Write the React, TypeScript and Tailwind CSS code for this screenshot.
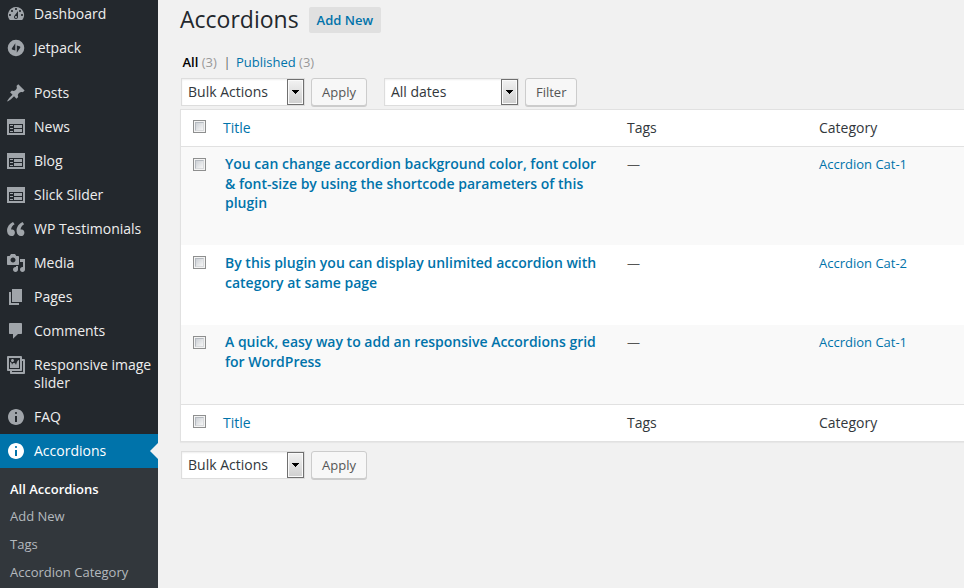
import type { ReactNode } from "react";

const paths = {
  dashboard:
    "M3.76 16h12.48A7.998 7.998 0 0 0 10 3a7.998 7.998 0 0 0-6.24 13zM10 4c.55 0 1 .45 1 1s-.45 1-1 1-1-.45-1-1 .45-1 1-1zM6 6c.55 0 1 .45 1 1s-.45 1-1 1-1-.45-1-1 .45-1 1-1zm8 0c.55 0 1 .45 1 1s-.45 1-1 1-1-.45-1-1 .45-1 1-1zm-5.37 5.55L12 7v6c0 1.1-.9 2-2 2s-2-.9-2-2c0-.57.24-1.08.63-1.45zM4 10c.55 0 1 .45 1 1s-.45 1-1 1-1-.45-1-1 .45-1 1-1zm12 0c.55 0 1 .45 1 1s-.45 1-1 1-1-.45-1-1 .45-1 1-1zm-5 3c0-.55-.45-1-1-1s-1 .45-1 1 .45 1 1 1 1-.45 1-1z",
  jetpack:
    "M10 1.7a8.3 8.3 0 1 0 0 16.6 8.3 8.3 0 0 0 0-16.6zM9.3 5.2v7.2L6.6 11.7c-.8-.2-1-.9-.7-1.5zM10.8 7.6l2.7.7c.8.2 1 .9.7 1.5l-3.4 5z",
  pin: "M10.44 3.02l1.82-1.82 6.36 6.35-1.83 1.82c-1.05-.68-2.48-.57-3.41.36l-.75.75c-.92.93-1.04 2.35-.35 3.41l-1.83 1.82-2.41-2.41-2.8 2.79c-.42.42-3.38 2.71-3.8 2.29s1.86-3.39 2.28-3.81l2.79-2.79L4.1 9.36l1.83-1.82c1.05.69 2.48.57 3.4-.36l.75-.75c.93-.92 1.05-2.35.36-3.41z",
  feedback:
    "M1 2h18v16H1zM3 7v9h14V7zM4 8h3v1H4zM8 8h8v3H8zM4 11h3v1H4zM8 12h8v3H8zM4 14h3v1H4z",
  quote:
    "M8.9 13.8c0-.88-.24-1.63-.72-2.25-.73-.92-2.16-1.04-2.99-.85C4.85 8.75 6.5 6.27 8.64 5.2L7 3C3.78 4.5.6 8 1.14 12.44 1.48 15.25 3.1 17 5.4 17c1 0 1.85-.3 2.5-.85s1-1.35 1-2.35zm9.5 0c0-.88-.24-1.63-.72-2.25-.73-.92-2.16-1.04-2.99-.85-.34-1.95 1.31-4.43 3.45-5.5L16.5 3c-3.22 1.5-6.4 5-5.86 9.44.34 2.81 1.96 4.56 4.26 4.56 1 0 1.85-.3 2.5-.85s1-1.35 1-2.35z",
  media:
    "M13 11V4c0-.55-.45-1-1-1h-1.67L9 1H5L3.67 3H2c-.55 0-1 .45-1 1v7c0 .55.45 1 1 1h10c.55 0 1-.45 1-1zM7 4.5c1.38 0 2.5 1.12 2.5 2.5S8.38 9.5 7 9.5 4.5 8.38 4.5 7 5.62 4.5 7 4.5zM14 6h5v10.5c0 1.38-1.12 2.5-2.5 2.5S14 17.88 14 16.5s1.12-2.5 2.5-2.5c.17 0 .34.02.5.05V9h-3V6zm-4 8.05V13h2v3.5c0 1.38-1.12 2.5-2.5 2.5S7 17.88 7 16.5 8.12 14 9.5 14c.17 0 .34.02.5.05z",
  page: "M6 15V2h10v13H6zm-1 1h8v2H3V5h2v11z",
  comment:
    "M4 2h11c.6 0 1 .4 1 1v9c0 .6-.4 1-1 1h-3l-5 4.7V13H4c-.6 0-1-.4-1-1V3c0-.6.4-1 1-1z",
  gallery:
    "M16 4h1.96c.57 0 1.04.47 1.04 1.04v12.92c0 .57-.47 1.04-1.04 1.04H5.04C4.47 19 4 18.53 4 17.96V16H2.04C1.47 16 1 15.53 1 14.96V2.04C1 1.47 1.47 1 2.04 1h12.92c.57 0 1.04.47 1.04 1.04V4zM3 14h11V3H3v11zm5-8.5C8 4.67 7.33 4 6.5 4S5 4.67 5 5.5 5.67 7 6.5 7 8 6.33 8 5.5zm2 4.5s1-5 3-5v8H4V7c2 0 2 3 2 3s.33-2 2-2 2 2 2 2zm7 7V6h-1v8.96c0 .57-.47 1.04-1.04 1.04H6v1h11z",
  info: "M10 2c4.42 0 8 3.58 8 8s-3.58 8-8 8-8-3.58-8-8 3.58-8 8-8zm1 4c0-.55-.45-1-1-1s-1 .45-1 1 .45 1 1 1 1-.45 1-1zm0 9V9H9v6h2z",
};

type IconName = keyof typeof paths;

function MenuItem({ icon, label, active }: { icon: IconName; label: string; active?: boolean }) {
  return (
    <a
      className={
        active
          ? "relative flex items-start bg-[#0073aa] py-2 pl-1.5 text-white"
          : "flex items-start py-2 pl-1.5 text-[#eee]"
      }
    >
      <svg
        viewBox="0 0 20 20"
        fillRule="evenodd"
        className={
          active
            ? "-my-px mr-2 size-5 shrink-0 fill-white"
            : "-my-px mr-2 size-5 shrink-0 fill-[#a0a5aa]"
        }
      >
        <path d={paths[icon]} />
      </svg>
      <span className="w-[122px] text-sm leading-[18px]">{label}</span>
      {active && (
        <span className="absolute top-[9px] right-0 border-y-8 border-r-8 border-y-transparent border-r-[#f1f1f1]" />
      )}
    </a>
  );
}

const mainMenu: { icon: IconName; label: string; active?: boolean }[] = [
  { icon: "pin", label: "Posts" },
  { icon: "feedback", label: "News" },
  { icon: "feedback", label: "Blog" },
  { icon: "feedback", label: "Slick Slider" },
  { icon: "quote", label: "WP Testimonials" },
  { icon: "media", label: "Media" },
  { icon: "page", label: "Pages" },
  { icon: "comment", label: "Comments" },
  { icon: "gallery", label: "Responsive image slider" },
  { icon: "info", label: "FAQ" },
  { icon: "info", label: "Accordions", active: true },
];

function Sidebar() {
  return (
    <nav className="flex h-[588px] w-[158px] shrink-0 flex-col overflow-hidden bg-[#23282d]">
      <div className="-mt-[3px] mb-[11px]">
        <MenuItem icon="dashboard" label="Dashboard" />
        <MenuItem icon="jetpack" label="Jetpack" />
      </div>
      {mainMenu.map((m) => (
        <MenuItem key={m.label} {...m} />
      ))}
      <div className="flex flex-1 flex-col bg-[#32373c] pt-[7px] pl-2.5 text-[13px] leading-[28px] text-[#b4b9be]">
        <a className="font-semibold text-white">All Accordions</a>
        <a className="-mt-px">Add New</a>
        <a>Tags</a>
        <a>Accordion Category</a>
      </div>
    </nav>
  );
}

function Select({ label, wide }: { label: string; wide?: boolean }) {
  return (
    <div
      className={
        (wide ? "w-[135px]" : "w-[124px]") +
        " flex h-7 justify-between border border-[#ddd] bg-white pl-1.5 text-sm leading-[26px] text-[#32373c] shadow-[inset_0_1px_2px_rgba(0,0,0,0.07)]"
      }
    >
      <span>{label}</span>
      <span className="flex w-[17px] items-center justify-center border border-[#707070] bg-linear-to-b from-[#f2f2f2] to-[#cfcfcf] shadow-[inset_0_0_0_1px_#fafafa]">
        <svg viewBox="0 0 7 4" className="h-1 w-[7px] fill-black" shapeRendering="crispEdges">
          <path d="M0 0h7L3.5 4z" />
        </svg>
      </span>
    </div>
  );
}

function Button({ children }: { children: ReactNode }) {
  return (
    <button className="h-7 rounded-[3px] border border-[#ccc] bg-[#f7f7f7] px-2.5 text-[13px] leading-[26px] text-[#555] shadow-[0_1px_0_#ccc]">
      {children}
    </button>
  );
}

function Checkbox() {
  return (
    <span className="block size-[13px] border border-[#8e8f8f] bg-[#f4f4f4] p-px">
      <span className="block size-full border border-[#b5bac0] border-r-[#d8dadc] border-b-[#d8dadc] bg-linear-to-br from-[#cdd1d6] to-[#f6f6f6]" />
    </span>
  );
}

const columns = "grid grid-cols-[42px_404px_192px_1fr]";

function HeadRow() {
  return (
    <div className={columns + " h-9 text-sm leading-9 text-[#32373c]"}>
      <div className="pt-2.5 pl-3">
        <Checkbox />
      </div>
      <a className="text-[#0073aa]">Title</a>
      <span>Tags</span>
      <span>Category</span>
    </div>
  );
}

const rows = [
  {
    lines: [
      "You can change accordion background color, font color",
      "& font-size by using the shortcode parameters of this",
      "plugin",
    ],
    category: "Accrdion Cat-1",
    style: "h-[98px] bg-[#f9f9f9]",
    text: "pt-2",
    title: "pt-[7px]",
  },
  {
    lines: ["By this plugin you can display unlimited accordion with", "category at same page"],
    category: "Accrdion Cat-2",
    style: "h-20 bg-white",
    text: "pt-[9px]",
    title: "pt-2",
  },
  {
    lines: ["A quick, easy way to add an responsive Accordions grid", "for WordPress"],
    category: "Accrdion Cat-1",
    style: "h-[79px] bg-[#f9f9f9]",
    text: "pt-2",
    title: "pt-[7px]",
  },
];

export default function App() {
  return (
    <div className="flex h-[588px] w-[964px] overflow-hidden bg-[#f1f1f1] font-['Open_Sans',sans-serif]">
      <Sidebar />
      <main className="flex min-w-0 flex-1 flex-col pl-[22px]">
        <header className="flex h-10 items-start">
          <h1 className="pt-1 text-[23px] leading-[30px] text-[#23282d]">Accordions</h1>
          <a className="mt-[7px] ml-2.5 h-[26px] rounded-[2px] bg-[#e0e0e0] px-2 text-[13px] leading-[26px] font-semibold text-[#0073aa]">
            Add New
          </a>
        </header>
        <div className="mt-[13px] flex h-[25px] pl-[2.5px] text-[13px] leading-[19px] whitespace-pre text-[#666]">
          <b className="font-semibold text-black">All</b>
          <span className="text-[#999]"> (3)</span>
          <span className="-mr-[1.5px]">{"  |  "}</span>
          <a className="text-[#0073aa]">Published</a>
          <span className="text-[#999]"> (3)</span>
        </div>
        <div className="flex h-[31px] items-start pl-px">
          <Select label="Bulk Actions" />
          <div className="mr-[17px] ml-1.5 flex">
            <Button>Apply</Button>
          </div>
          <Select label="All dates" wide />
          <div className="ml-1.5 flex">
            <Button>Filter</Button>
          </div>
        </div>
        <section className="-mr-px border border-[#e1e1e1] bg-white shadow-[0_1px_1px_rgba(0,0,0,0.04)]">
          <HeadRow />
          <div className="border-y border-[#e1e1e1]">
            {rows.map((r) => (
              <div key={r.lines[0]} className={columns + " " + r.style}>
                <div className="pt-[11px] pl-3">
                  <Checkbox />
                </div>
                <a
                  className={
                    r.title + " pl-[2px] text-sm leading-[19.6px] font-semibold text-[#0073aa]"
                  }
                >
                  {r.lines.map((l) => (
                    <span key={l} className="block whitespace-nowrap">
                      {l}
                    </span>
                  ))}
                </a>
                <span className={r.text + " text-[13px] leading-[19px] text-[#555]"}>—</span>
                <a className={r.text + " text-[13px] leading-[19px] text-[#0073aa]"}>
                  {r.category}
                </a>
              </div>
            ))}
          </div>
          <HeadRow />
        </section>
        <div className="mt-[9px] flex pl-px">
          <Select label="Bulk Actions" />
          <div className="ml-1.5 flex">
            <Button>Apply</Button>
          </div>
        </div>
      </main>
    </div>
  );
}
